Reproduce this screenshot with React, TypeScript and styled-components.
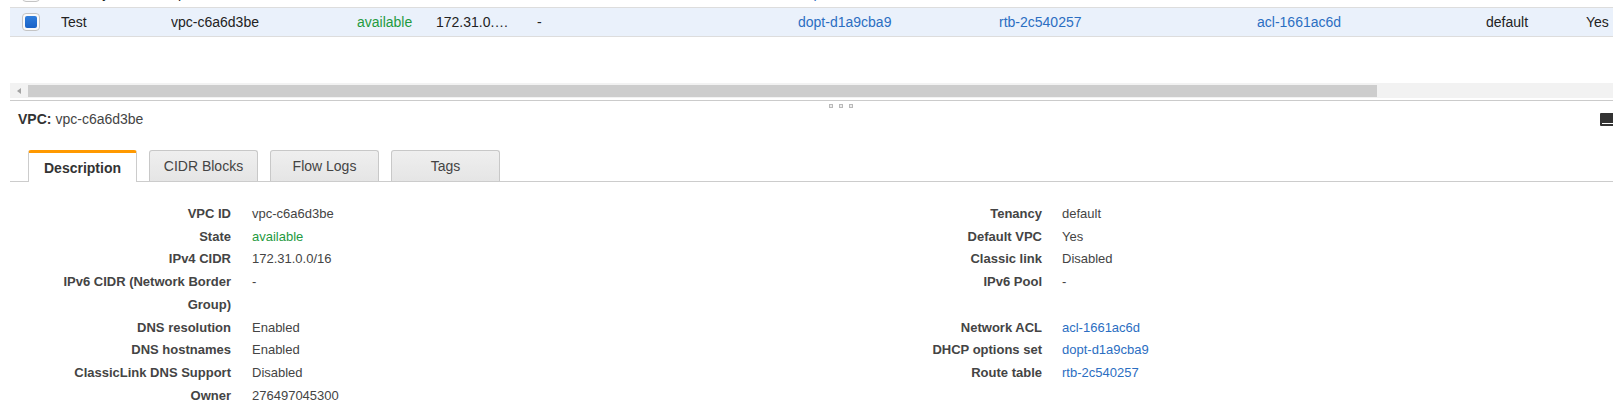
import React from 'react';
import styled, { createGlobalStyle } from 'styled-components';

const GlobalStyle = createGlobalStyle`
  html, body { margin: 0; padding: 0; background: #fff; overflow: hidden; }
  body { font-family: "Liberation Sans", Arial, sans-serif; }
  * { box-sizing: border-box; }
`;

const Page = styled.div`
  width: 1613px;
  height: 410px;
  overflow: hidden;
  padding-left: 10px;
`;

/* ---------- table ---------- */
const TableViewport = styled.div`
  height: 83px;
  overflow: hidden;
`;

const TableBody = styled.div`
  margin-top: -21px;
  width: max-content;
`;

const Row = styled.div<{ $selected?: boolean }>`
  display: flex;
  align-items: center;
  height: 29px;
  border-bottom: 1px solid #dddddd;
  background: ${(p) => (p.$selected ? '#eaf1fb' : '#ffffff')};
  font-size: 14px;
  color: #222;
`;

const Cell = styled.div<{ $w: number; $pr?: number }>`
  flex: 0 0 ${(p) => p.$w}px;
  width: ${(p) => p.$w}px;
  padding-right: ${(p) => p.$pr ?? 0}px;
  white-space: nowrap;
  overflow: hidden;
  text-overflow: ellipsis;
`;

const CheckCell = styled.div`
  flex: 0 0 51px;
  padding-left: 12px;
  display: flex;
  align-items: center;
`;

const CheckBox = styled.span<{ $checked?: boolean }>`
  width: 18px;
  height: 18px;
  border: 1px solid #c4c4c4;
  border-radius: 4px;
  background: #fafafa;
  display: flex;
  align-items: center;
  justify-content: center;
  &::after {
    content: '';
    display: ${(p) => (p.$checked ? 'block' : 'none')};
    width: 12px;
    height: 12px;
    border-radius: 2px;
    background: linear-gradient(#2f7ddc, #1b63c6);
  }
`;

const Link = styled.span`
  color: #2b6ec2;
`;

const Green = styled.span`
  color: #1f9a3f;
`;

/* ---------- scrollbar ---------- */
const HScroll = styled.div`
  display: flex;
  align-items: flex-start;
  height: 15px;
  background: #f2f2f2;
  margin-bottom: 2px;
`;

const ArrowBtn = styled.div`
  width: 18px;
  height: 15px;
  display: flex;
  align-items: center;
  padding-left: 7px;
  &::before {
    content: '';
    width: 0;
    height: 0;
    border-top: 3px solid transparent;
    border-bottom: 3px solid transparent;
    border-right: 4px solid #a3a3a3;
  }
`;

const Thumb = styled.div`
  width: 1349px;
  height: 12px;
  margin-top: 2px;
  background: #cdcdcd;
`;

/* ---------- lower panel ---------- */
const Panel = styled.section`
  border-top: 1px solid #cbcbcb;
`;

const Grip = styled.div`
  height: 10px;
  padding: 3px 0 0 819px;
  display: flex;
  gap: 6px;
`;

const GripDot = styled.span`
  width: 4px;
  height: 4px;
  border: 1px solid #b9b9b9;
  background: #ededed;
`;

const Header = styled.div`
  height: 17px;
  display: flex;
  align-items: center;
  padding-left: 8px;
  font-size: 14px;
  line-height: 17px;
  color: #444;
`;

const HeaderKey = styled.b`
  color: #333;
  margin-right: 4px;
`;

const PanelIcon = styled.svg`
  margin-left: auto;
  margin-right: -3px;
  flex: 0 0 16px;
`;

const TabBar = styled.div`
  margin-top: 22px;
  display: flex;
  align-items: flex-end;
  gap: 12px;
  padding-left: 18px;
  border-bottom: 1px solid #cccccc;
`;

const Tab = styled.div<{ $active?: boolean }>`
  width: 109px;
  display: flex;
  align-items: center;
  justify-content: center;
  font-size: 14px;
  border-radius: 3px 3px 0 0;
  ${(p) =>
    p.$active
      ? `
    height: 32px;
    margin-bottom: -1px;
    background: #ffffff;
    border: 1px solid #cccccc;
    border-top: 3px solid #ff9900;
    border-bottom: none;
    font-weight: bold;
    color: #333;
  `
      : `
    height: 31px;
    background: linear-gradient(#efefef, #e5e5e5);
    border: 1px solid #c8c8c8;
    border-bottom: none;
    color: #444;
  `}
`;

const DetailGrid = styled.div`
  padding-top: 21px;
  display: grid;
  grid-template-columns: 242px 569px 241px 1fr;
  font-size: 13px;
  line-height: 22.7px;
  color: #444;
`;

const Label = styled.div<{ $side: 'left' | 'right' }>`
  font-weight: bold;
  text-align: right;
  padding-left: ${(p) => (p.$side === 'left' ? 46 : 20)}px;
  padding-right: ${(p) => (p.$side === 'left' ? 21 : 20)}px;
`;

const Value = styled.div``;

type V = { text: string; kind?: 'link' | 'green' };

const render = (v: V) =>
  v.kind === 'link' ? <Link>{v.text}</Link> : v.kind === 'green' ? <Green>{v.text}</Green> : v.text;

const widths = [110, 186, 79, 101, 261, 201, 258, 229, 100, 100];

const tableRows: { selected?: boolean; cells: V[] }[] = [
  {
    cells: [
      { text: 'Primary' },
      { text: 'vpc-0a1b2c3d' },
      { text: 'available', kind: 'green' },
      { text: '10.0.0.0/16' },
      { text: '-' },
      { text: 'dopt-d1a9cba9', kind: 'link' },
      { text: 'rtb-0f3e1a22', kind: 'link' },
      { text: 'acl-0b8d2e4f', kind: 'link' },
      { text: 'default' },
      { text: 'No' },
    ],
  },
  {
    selected: true,
    cells: [
      { text: 'Test' },
      { text: 'vpc-c6a6d3be' },
      { text: 'available', kind: 'green' },
      { text: '172.31.0.0/16' },
      { text: '-' },
      { text: 'dopt-d1a9cba9', kind: 'link' },
      { text: 'rtb-2c540257', kind: 'link' },
      { text: 'acl-1661ac6d', kind: 'link' },
      { text: 'default' },
      { text: 'Yes' },
    ],
  },
];

const details: [string, V, string, V][] = [
  ['VPC ID', { text: 'vpc-c6a6d3be' }, 'Tenancy', { text: 'default' }],
  ['State', { text: 'available', kind: 'green' }, 'Default VPC', { text: 'Yes' }],
  ['IPv4 CIDR', { text: '172.31.0.0/16' }, 'Classic link', { text: 'Disabled' }],
  ['IPv6 CIDR (Network Border Group)', { text: '-' }, 'IPv6 Pool', { text: '-' }],
  ['DNS resolution', { text: 'Enabled' }, 'Network ACL', { text: 'acl-1661ac6d', kind: 'link' }],
  ['DNS hostnames', { text: 'Enabled' }, 'DHCP options set', { text: 'dopt-d1a9cba9', kind: 'link' }],
  ['ClassicLink DNS Support', { text: 'Disabled' }, 'Route table', { text: 'rtb-2c540257', kind: 'link' }],
  ['Owner', { text: '276497045300' }, '', { text: '' }],
];

const tabs = ['Description', 'CIDR Blocks', 'Flow Logs', 'Tags'];

export default function App() {
  return (
    <>
      <GlobalStyle />
      <Page>
        <TableViewport>
          <TableBody>
            {tableRows.map((r, i) => (
              <Row key={i} $selected={r.selected}>
                <CheckCell>
                  <CheckBox $checked={r.selected} />
                </CheckCell>
                {r.cells.map((c, j) => (
                  <Cell key={j} $w={widths[j]} $pr={j === 3 ? 25 : 0}>
                    {render(c)}
                  </Cell>
                ))}
              </Row>
            ))}
          </TableBody>
        </TableViewport>
        <HScroll>
          <ArrowBtn />
          <Thumb />
        </HScroll>
        <Panel>
          <Grip>
            <GripDot />
            <GripDot />
            <GripDot />
          </Grip>
          <Header>
            <HeaderKey>VPC:</HeaderKey>
            vpc-c6a6d3be
            <PanelIcon width="16" height="13" viewBox="0 0 16 13">
              <rect x="0" y="0" width="16" height="13" rx="1" fill="#333" />
              <rect x="2" y="10" width="14" height="1" fill="#fff" />
            </PanelIcon>
          </Header>
          <TabBar>
            {tabs.map((t, i) => (
              <Tab key={t} $active={i === 0}>
                {t}
              </Tab>
            ))}
          </TabBar>
          <DetailGrid>
            {details.map(([l1, v1, l2, v2], i) => (
              <React.Fragment key={i}>
                <Label $side="left">{l1}</Label>
                <Value>{render(v1)}</Value>
                <Label $side="right">{l2}</Label>
                <Value>{render(v2)}</Value>
              </React.Fragment>
            ))}
          </DetailGrid>
        </Panel>
      </Page>
    </>
  );
}
